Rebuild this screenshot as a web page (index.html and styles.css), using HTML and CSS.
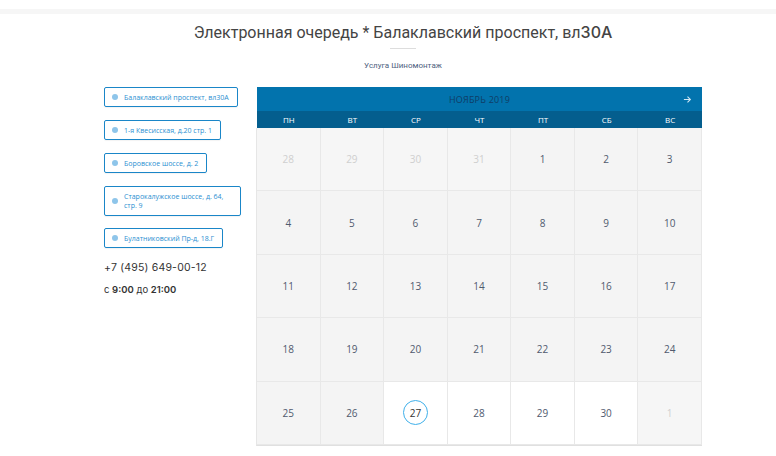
FILE: index.html
```html
<!DOCTYPE html>
<html lang="ru">
<head>
  <meta charset="UTF-8">
  <title>Электронная очередь</title>
  <link rel="stylesheet" href="styles.css">
</head>
<body>
  <div class="top-strip"></div>
  <div class="page">
    <h1 class="title">Электронная очередь * Балаклавский проспект, вл<span class="num">30А</span></h1>
    <div class="divider"></div>
    <div class="service">Услуга Шиномонтаж</div>

    <div class="main">
      <div class="side">
        <div class="place"><span class="dot"></span><span>Балаклавский проспект, вл30А</span></div>
        <div class="place"><span class="dot"></span><span>1-я Квесисская, д.20 стр. 1</span></div>
        <div class="place"><span class="dot"></span><span>Боровское шоссе, д. 2</span></div>
        <div class="place"><span class="dot"></span><span>Старокалужское шоссе, д. 64, стр. 9</span></div>
        <div class="place"><span class="dot"></span><span>Булатниковский Пр-д, 18.Г</span></div>
        <div class="phone">+7 (495) 649-00-12</div>
        <div class="hours">с <b>9:00</b> до <b>21:00</b></div>
      </div>

      <div class="calendar">
        <div class="cal-head">
          <span class="month">НОЯБРЬ 2019</span>
          <svg class="next" width="9" height="9" viewBox="0 0 10 10"><path d="M1 5h7M5 1.8L8.2 5 5 8.2" fill="none" stroke="#cfe6f4" stroke-width="1.2"/></svg>
        </div>
        <div class="weekdays">
          <span>ПН</span><span>ВТ</span><span>СР</span><span>ЧТ</span><span>ПТ</span><span>СБ</span><span>ВС</span>
        </div>
        <div class="days" id="days"></div>
      </div>
    </div>
  </div>

  <script>
    const days = document.getElementById("days");
    const cells = [];
    [28, 29, 30, 31].forEach(d => cells.push({ d: d, cls: "other" }));
    for (let d = 1; d <= 30; d++) {
      cells.push({ d: d, cls: d < 27 ? "past" : (d === 27 ? "today" : "open") });
    }
    cells.push({ d: 1, cls: "other" });
    cells.forEach(c => {
      const el = document.createElement("div");
      el.className = "day " + c.cls;
      el.innerHTML = "<span>" + c.d + "</span>";
      days.appendChild(el);
    });
  </script>
</body>
</html>
```

FILE: styles.css
```css
body {
  margin: 0;
  background: #fff;
  font-family: Roboto, "Liberation Sans", sans-serif;
  color: #333;
}
.top-strip {
  margin-top: 9px;
  height: 5px;
  background: #f6f6f6;
}
.page {
  width: 598px;
  margin-left: 104px;
}
.title {
  margin: 8px 0 0;
  font-size: 16px;
  line-height: 20px;
  font-weight: 400;
  text-align: center;
  color: #444;
}
.title .num {
  font-family: Inter, sans-serif;
  font-weight: 500;
}
.divider {
  width: 26px;
  height: 1px;
  background: #ddd;
  margin: 5px auto 0;
}
.service {
  margin-top: 11px;
  text-align: center;
  font-size: 8px;
  line-height: 12px;
  color: #4f5f80;
}
.main {
  display: flex;
  margin-top: 15px;
}
.side {
  width: 153px;
  flex-shrink: 0;
  display: flex;
  flex-direction: column;
  align-items: flex-start;
}
.place {
  display: flex;
  align-items: center;
  max-width: 120px;
  min-height: 18px;
  padding: 0 8px 0 7px;
  border: 1px solid #1a86c8;
  border-radius: 2px;
  margin-bottom: 13px;
  font-family: "Open Sans", sans-serif;
  font-size: 7px;
  line-height: 9px;
  color: #2b8fd1;
  box-shadow: 0 1px 1px rgba(0, 0, 0, 0.05);
}
.place:nth-child(4) {
  min-height: 28px;
  margin-bottom: 12px;
}
.dot {
  width: 6px;
  height: 6px;
  border-radius: 50%;
  background: #8ec5ea;
  margin-right: 6px;
  flex-shrink: 0;
}
.phone {
  margin-top: 0;
  font-family: Inter, sans-serif;
  font-size: 10.5px;
  line-height: 14px;
  color: #333;
  letter-spacing: 0.2px;
}
.hours {
  margin-top: 8px;
  font-family: Inter, sans-serif;
  font-size: 9.5px;
  line-height: 14px;
  color: #333;
}
.hours b {
  font-weight: 600;
}
.calendar {
  width: 445px;
  font-family: "Open Sans", sans-serif;
}
.cal-head {
  height: 24px;
  background: #0273ad;
  display: flex;
  align-items: center;
  justify-content: center;
  position: relative;
}
.month {
  font-size: 9px;
  color: #0f3d66;
  letter-spacing: 0.2px;
}
.next {
  position: absolute;
  right: 10px;
  top: 8px;
}
.weekdays {
  height: 17px;
  background: #045e8e;
  display: grid;
  grid-template-columns: repeat(7, 1fr);
  align-items: center;
  text-align: center;
  font-size: 8px;
  color: #fff;
}
.days {
  display: grid;
  grid-template-columns: repeat(7, 1fr);
  grid-auto-rows: 63.4px;
  border-left: 1px solid #e6e6e6;
  border-bottom: 1px solid #e0e0e0;
  margin-left: -1px;
}
.day {
  display: flex;
  align-items: center;
  justify-content: center;
  background: #f4f4f4;
  border-right: 1px solid #e8e8e8;
  border-bottom: 1px solid #e8e8e8;
  font-size: 10px;
  color: #505a6e;
}
.day.other {
  color: #cfcfcf;
  background: #f6f6f6;
}
.day.open,
.day.today {
  background: #fff;
}
.day.today span {
  width: 23px;
  height: 23px;
  border: 1px solid #3fb0ea;
  border-radius: 50%;
  display: flex;
  align-items: center;
  justify-content: center;
  color: #333;
}
```
